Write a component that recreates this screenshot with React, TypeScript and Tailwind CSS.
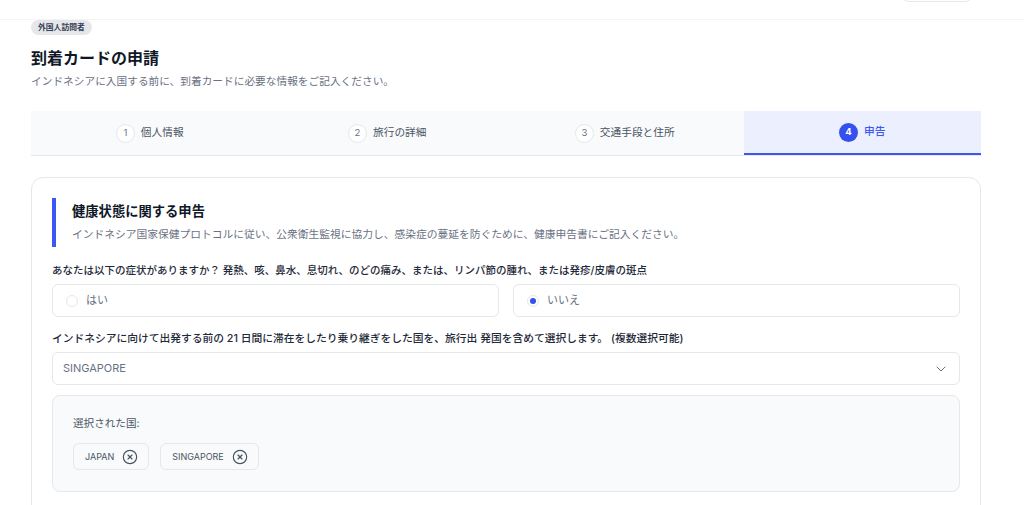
import { ChevronDown, CircleX } from 'lucide-react';

const STEPS = [
  { n: 1, label: '個人情報' },
  { n: 2, label: '旅行の詳細' },
  { n: 3, label: '交通手段と住所' },
  { n: 4, label: '申告' },
];

export default function App() {
  return (
    <div className="min-h-screen bg-white font-['Inter','Noto_Sans_CJK_JP',sans-serif] text-gray-900">
      <header className="h-[20px] border-b border-gray-100 overflow-hidden flex justify-end pr-[51px]">
        <div className="-mt-[30px] h-[32px] w-[72px] rounded-lg border border-gray-200 bg-white" />
      </header>

      <main className="pl-[31px] pr-[43px]">
        <div className="flex">
          <span className="flex h-[15px] items-center rounded-full bg-gray-200 px-[7px] text-[7.8px] font-bold text-gray-700">
            外国人訪問者
          </span>
        </div>
        <h1 className="mt-[11px] text-[16px] leading-6 font-bold text-gray-900">到着カードの申請</h1>
        <p className="mt-[4px] text-[10.7px] leading-4 text-gray-500">
          インドネシアに入国する前に、到着カードに必要な情報をご記入ください。
        </p>

        <Stepper active={4} />

        <section className="mt-[21px] rounded-xl border border-gray-200 bg-white p-5 pb-8">
          <div className="border-l-4 border-[#3d57f5] pl-4 pt-[3px] pb-[4px]">
            <h2 className="text-[13.3px] leading-5 font-bold text-gray-900">健康状態に関する申告</h2>
            <p className="mt-[6px] text-[10.75px] leading-4 text-gray-500">
              インドネシア国家保健プロトコルに従い、公衆衛生監視に協力し、感染症の蔓延を防ぐために、健康申告書にご記入ください。
            </p>
          </div>

          <p className="mt-[16px] text-[10.5px] leading-4 font-medium text-gray-800">
            あなたは以下の症状がありますか？ 発熱、咳、鼻水、息切れ、のどの痛み、または、リンパ節の腫れ、または発疹/皮膚の斑点
          </p>
          <div className="mt-[5px] grid grid-cols-2 gap-[14px]">
            <RadioOption label="はい" checked={false} />
            <RadioOption label="いいえ" checked />
          </div>

          <p className="mt-[14px] text-[10.75px] leading-4 font-medium text-gray-800">
            インドネシアに向けて出発する前の 21 日間に滞在をしたり乗り継ぎをした国を、旅行出 発国を含めて選択します。 (複数選択可能)
          </p>
          <div className="mt-[5px] flex h-[33px] items-center justify-between rounded-md border border-gray-200 bg-white pl-[10px] pr-[10px]">
            <span className="text-[11px] text-gray-500">SINGAPORE</span>
            <ChevronDown className="h-[16px] w-[16px] text-gray-500" strokeWidth={1.5} />
          </div>

          <div className="mt-[10px] rounded-lg border border-gray-200 bg-gray-50 px-5 pt-[20px] pb-[21px]">
            <p className="text-[10.6px] leading-4 text-gray-600">選択された国:</p>
            <div className="mt-[11px] flex gap-[11px]">
              {['JAPAN', 'SINGAPORE'].map((c) => (
                <span
                  key={c}
                  className="inline-flex h-[27px] items-center gap-[8px] rounded-md border border-gray-200 bg-gray-50 pl-[11px] pr-[10px] text-[9px] text-gray-600"
                >
                  {c}
                  <CircleX className="h-[16px] w-[16px] text-gray-600" strokeWidth={1.75} />
                </span>
              ))}
            </div>
          </div>
        </section>
      </main>
    </div>
  );
}

function Stepper({ active }: { active: number }) {
  return (
    <div className="mt-[21px] flex border-b border-gray-200 bg-gray-50">
      {STEPS.map((s) => {
        const on = s.n === active;
        return (
          <div
            key={s.n}
            className={`flex h-[44px] flex-1 items-center justify-center gap-[6px] ${
              on ? '-mb-px border-b-2 border-[#3d57f5] bg-[#eceffd]' : ''
            }`}
          >
            <span
              className={`flex h-[19px] w-[19px] items-center justify-center rounded-full text-[9.5px] ${
                on ? 'bg-[#3451f0] font-bold text-white' : 'border border-gray-200 bg-white text-gray-500'
              }`}
            >
              {s.n}
            </span>
            <span className={`text-[10.7px] ${on ? 'text-[#3d57f5] font-medium' : 'text-gray-600'}`}>{s.label}</span>
          </div>
        );
      })}
    </div>
  );
}

function RadioOption({ label, checked }: { label: string; checked: boolean }) {
  return (
    <label className="flex h-[33px] items-center gap-[8px] rounded-md border border-gray-200 bg-white pl-[13px]">
      <span className="flex h-[12px] w-[12px] items-center justify-center rounded-full border border-gray-200">
        {checked && <span className="h-[6px] w-[6px] rounded-full bg-[#3451f0]" />}
      </span>
      <span className="text-[11px] text-gray-500">{label}</span>
    </label>
  );
}
